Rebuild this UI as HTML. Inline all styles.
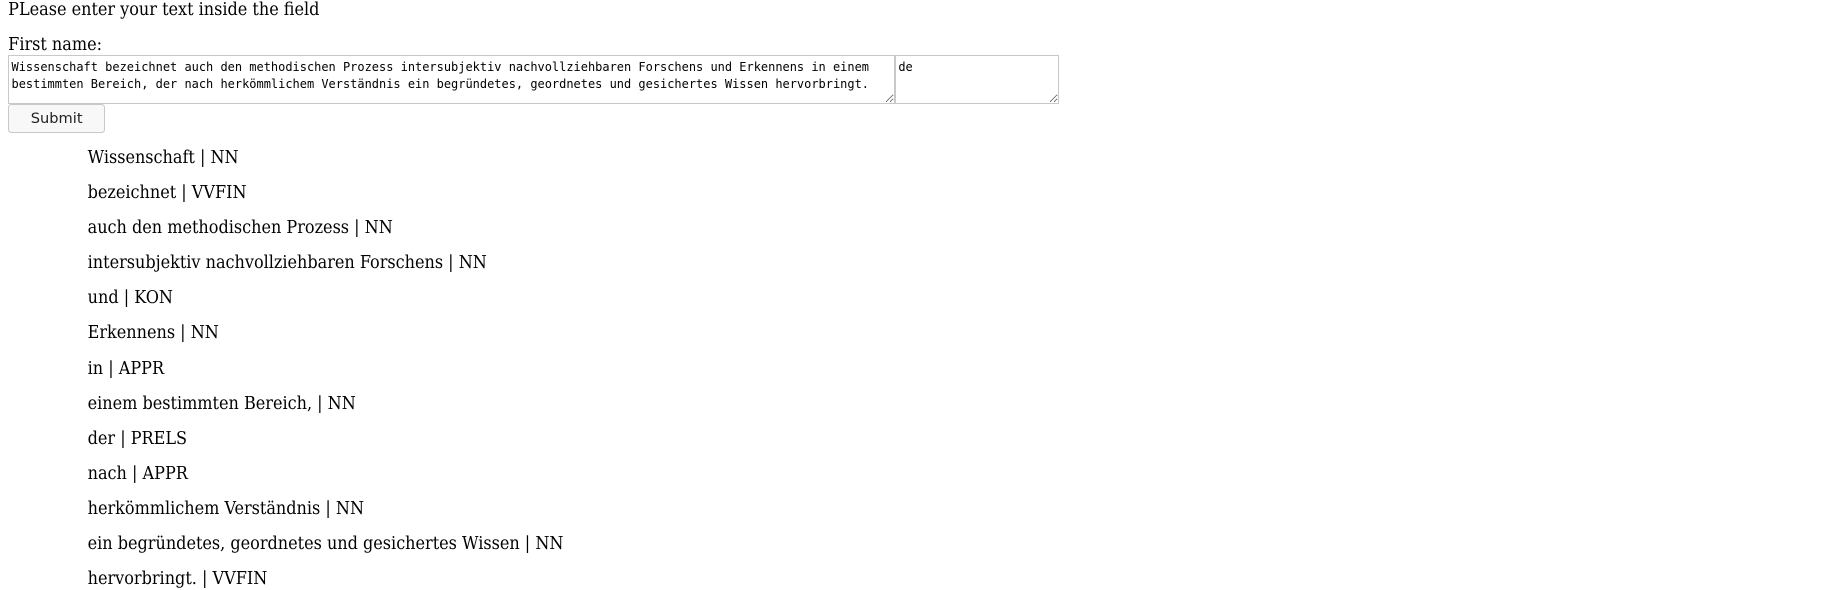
<!DOCTYPE html>
<html><head><meta charset="utf-8"><style>
html,body{margin:0;padding:0;background:#fff;}
body{zoom:1.1684;width:1568px;height:503px;position:relative;overflow:hidden;font-family:"DejaVu Serif Condensed","DejaVu Serif","Liberation Serif",serif;font-stretch:condensed;font-size:15.3px;color:#000;}
.a{position:absolute;white-space:nowrap;line-height:19px;}
textarea{position:absolute;box-sizing:border-box;margin:0;border:1px solid #c8c8c8;font-family:"DejaVu Sans Mono","Liberation Mono",monospace;font-size:10.25px;line-height:14px;padding:3px 2px;resize:both;color:#000;background:#fff;overflow:hidden;}
button{position:absolute;box-sizing:border-box;margin:0;border:1px solid #c8c8c8;border-radius:3px;background:#f8f8f8;font-family:"DejaVu Sans","Liberation Sans",sans-serif;font-size:12.5px;color:#222;padding:0;}
</style></head><body>
<div class="a" style="left:7px;top:-1px">PLease enter your text inside the field</div>
<div class="a" style="left:7px;top:29px">First name:</div>
<textarea style="left:7px;top:47px;width:759px;height:42px" spellcheck="true">Wissenschaft bezeichnet auch den methodischen Prozess intersubjektiv nachvollziehbaren Forschens und Erkennens in einem bestimmten Bereich, der nach herkömmlichem Verständnis ein begründetes, geordnetes und gesichertes Wissen hervorbringt.</textarea>
<textarea style="left:766px;top:47px;width:140px;height:42px">de</textarea>
<button style="left:7px;top:89px;width:83px;height:25px">Submit</button>
<div class="a" style="left:75px;top:126px">Wissenschaft | NN</div>
<div class="a" style="left:75px;top:156px">bezeichnet | VVFIN</div>
<div class="a" style="left:75px;top:186px">auch den methodischen Prozess | NN</div>
<div class="a" style="left:75px;top:216px">intersubjektiv nachvollziehbaren Forschens | NN</div>
<div class="a" style="left:75px;top:246px">und | KON</div>
<div class="a" style="left:75px;top:276px">Erkennens | NN</div>
<div class="a" style="left:75px;top:306px">in | APPR</div>
<div class="a" style="left:75px;top:336px">einem bestimmten Bereich, | NN</div>
<div class="a" style="left:75px;top:366px">der | PRELS</div>
<div class="a" style="left:75px;top:396px">nach | APPR</div>
<div class="a" style="left:75px;top:426px">herkömmlichem Verständnis | NN</div>
<div class="a" style="left:75px;top:456px">ein begründetes, geordnetes und gesichertes Wissen | NN</div>
<div class="a" style="left:75px;top:486px">hervorbringt. | VVFIN</div>
</body></html>
